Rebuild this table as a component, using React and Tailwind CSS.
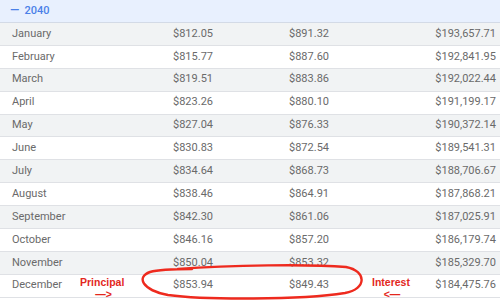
import React from 'react';

const rows = [
  ['January', '$812.05', '$891.32', '$193,657.71'],
  ['February', '$815.77', '$887.60', '$192,841.95'],
  ['March', '$819.51', '$883.86', '$192,022.44'],
  ['April', '$823.26', '$880.10', '$191,199.17'],
  ['May', '$827.04', '$876.33', '$190,372.14'],
  ['June', '$830.83', '$872.54', '$189,541.31'],
  ['July', '$834.64', '$868.73', '$188,706.67'],
  ['August', '$838.46', '$864.91', '$187,868.21'],
  ['September', '$842.30', '$861.06', '$187,025.91'],
  ['October', '$846.16', '$857.20', '$186,179.74'],
  ['November', '$850.04', '$853.32', '$185,329.70'],
  ['December', '$853.94', '$849.43', '$184,475.76'],
];

const App = () => {
  return (
    <div className="relative w-[500px] h-[300px] overflow-hidden bg-white font-['Roboto',sans-serif] text-[11px] text-[#6a6a6a]">
      {/* year header */}
      <div className="h-[23px] flex items-center pl-[10px] bg-[#e8f0fe] border-b border-[#d3dae6] text-[#4a80e8] font-medium">
        <span className="mr-[6px] scale-x-110 origin-left">—</span>
        <span>2040</span>
      </div>

      {rows.map((r, i) => (
        <div
          key={r[0]}
          className={`h-[22.9px] grid grid-cols-[161px_116px_1fr_auto] items-center pl-[12px] pr-[4px] border-b border-[#dfe1e5] ${i % 2 === 0 ? 'bg-[#f1f3f4]' : 'bg-white'}`}
        >
          <span>{r[0]}</span>
          <span>{r[1]}</span>
          <span>{r[2]}</span>
          <span className="text-right">{r[3]}</span>
        </div>
      ))}

      {/* annotations */}
      <div className="absolute left-[80px] top-[276px] flex flex-col items-center text-[#e3271d] font-bold font-['Liberation_Sans',sans-serif] text-[10.5px] leading-[12px]">
        <span>Principal</span>
        <span className="ml-[3px]">—&gt;</span>
      </div>
      <div className="absolute left-[372px] top-[276px] flex flex-col items-center text-[#e3271d] font-bold font-['Liberation_Sans',sans-serif] text-[10.5px] leading-[12px]">
        <span>Interest</span>
        <span className="ml-[2px]">&lt;—</span>
      </div>
      <svg className="absolute inset-0 pointer-events-none" width="500" height="300" viewBox="0 0 500 300">
        <path
          d="M 178 269 C 230 265, 310 264, 346 267 C 367 271, 367 289, 345 293 C 300 300, 205 300, 168 295 C 142 290, 136 277, 150 272 C 160 269, 175 269, 192 269"
          fill="none"
          stroke="#ee2a1e"
          strokeWidth="2.4"
          strokeLinecap="round"
        />
      </svg>
    </div>
  );
};

export default App;
